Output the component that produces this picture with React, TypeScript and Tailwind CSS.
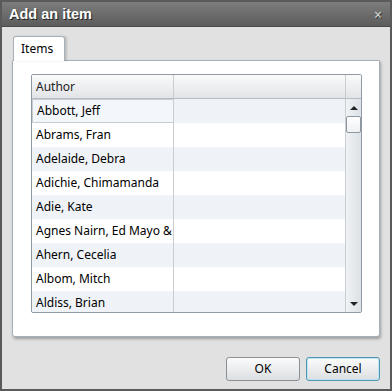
const authors = [
  'Abbott, Jeff',
  'Abrams, Fran',
  'Adelaide, Debra',
  'Adichie, Chimamanda',
  'Adie, Kate',
  'Agnes Nairn, Ed Mayo &',
  'Ahern, Cecelia',
  'Albom, Mitch',
  'Aldiss, Brian',
]

export default function App() {
  return (
    <div
      className="w-[392px] h-[391px] bg-[#3c3c3c] overflow-hidden"
      style={{ fontFamily: '"Noto Sans", "Open Sans", sans-serif' }}
    >
      <div className="w-full h-full flex flex-col border-2 border-[#5a5a5a] bg-[#e1e1e1]">
        {/* Title bar */}
        <div className="h-[25px] shrink-0 flex items-center justify-between pl-[7px] pr-[8px] bg-gradient-to-b from-[#7d7d7d] to-[#5c5c5c] border-b border-[#4a4a4a]">
          <span
            className="text-white font-bold text-[14.5px] leading-none [text-shadow:1px_1px_0_#222]"
            style={{ fontFamily: '"Liberation Sans", Arial, sans-serif' }}
          >
            Add an item
          </span>
          <span className="text-[#d8d8d8] text-[14px] leading-none [text-shadow:1px_1px_0_#333] mt-[2px]">×</span>
        </div>

        {/* Body */}
        <div className="flex-1 flex flex-col px-[10px] pt-[9px] pb-[8px]">
          {/* Tab */}
          <div className="flex">
            <div className="h-[25px] w-[52px] ml-px bg-white border border-b-0 border-[#a7b0b8] rounded-t-[3px] text-[12px] text-black flex items-center pl-[7px] shadow-[2px_0_2px_rgba(0,0,0,0.15)] relative z-10 -mb-px">
              Items
            </div>
          </div>

          {/* Panel */}
          <div className="h-[277px] bg-white border border-[#a7b0b8] rounded-b-[3px] shadow-[1px_2px_3px_rgba(0,0,0,0.3)] pt-[13px] pl-[18px] pr-[17px]">
            <div className="h-[239px] border border-[#8f9aa6] rounded-[2px] flex flex-col overflow-hidden">
              {/* Header */}
              <div className="h-[24px] shrink-0 flex bg-gradient-to-b from-[#fafafa] to-[#e2e4e7] border-b border-[#b5bcc3] text-[12px] text-[#222]">
                <div className="w-[142px] border-r border-[#c8cdd2] flex items-center pl-[4px]">Author</div>
                <div className="flex-1 border-r border-[#c8cdd2]" />
                <div className="w-[15px]" />
              </div>

              {/* Rows + scrollbar */}
              <div className="flex-1 flex min-h-0">
                <div className="flex-1 flex flex-col overflow-hidden">
                  {authors.map((a, i) => (
                    <div
                      key={a}
                      className={`h-[24px] shrink-0 flex ${i % 2 === 0 ? 'bg-[#eff3f8]' : 'bg-white'} text-[12px] text-black`}
                    >
                      <div
                        className={`w-[142px] border-r border-[#c8cdd2] flex items-center pl-[4px] whitespace-nowrap overflow-hidden ${
                          i === 0 ? 'border border-[#6dc1d3] bg-[#f3f6fa] pl-[3px]' : ''
                        }`}
                      >
                        {a}
                      </div>
                      <div className="flex-1" />
                    </div>
                  ))}
                </div>
                <div className="w-[16px] shrink-0 border-l border-[#c8cdd2] bg-gradient-to-r from-[#f0f2f4] to-[#dde2e7] flex flex-col items-center">
                  <div className="h-[17px] flex items-center justify-center">
                    <div className="w-0 h-0 border-l-[4px] border-r-[4px] border-b-[4px] border-l-transparent border-r-transparent border-b-[#222]" />
                  </div>
                  <div className="w-[15px] h-[17px] bg-gradient-to-b from-white to-[#eef0f2] border border-[#8e979f] rounded-[2px]" />
                  <div className="flex-1" />
                  <div className="h-[17px] flex items-center justify-center">
                    <div className="w-0 h-0 border-l-[4px] border-r-[4px] border-t-[4px] border-l-transparent border-r-transparent border-t-[#222]" />
                  </div>
                </div>
              </div>
            </div>
          </div>

          {/* Buttons */}
          <div className="flex-1 flex items-end justify-end gap-[6px]">
            <button className="w-[74px] h-[24px] rounded-[3px] border border-[#8a8f95] bg-gradient-to-b from-[#fbfbfb] to-[#dcdfe2] text-[12px] text-black">
              OK
            </button>
            <button className="w-[74px] h-[24px] rounded-[3px] border border-[#4f95b4] bg-gradient-to-b from-[#fbfbfb] to-[#dcdfe2] text-[12px] text-black shadow-[inset_0_0_0_1px_#bfe4f0]">
              Cancel
            </button>
          </div>
        </div>
      </div>
    </div>
  )
}
